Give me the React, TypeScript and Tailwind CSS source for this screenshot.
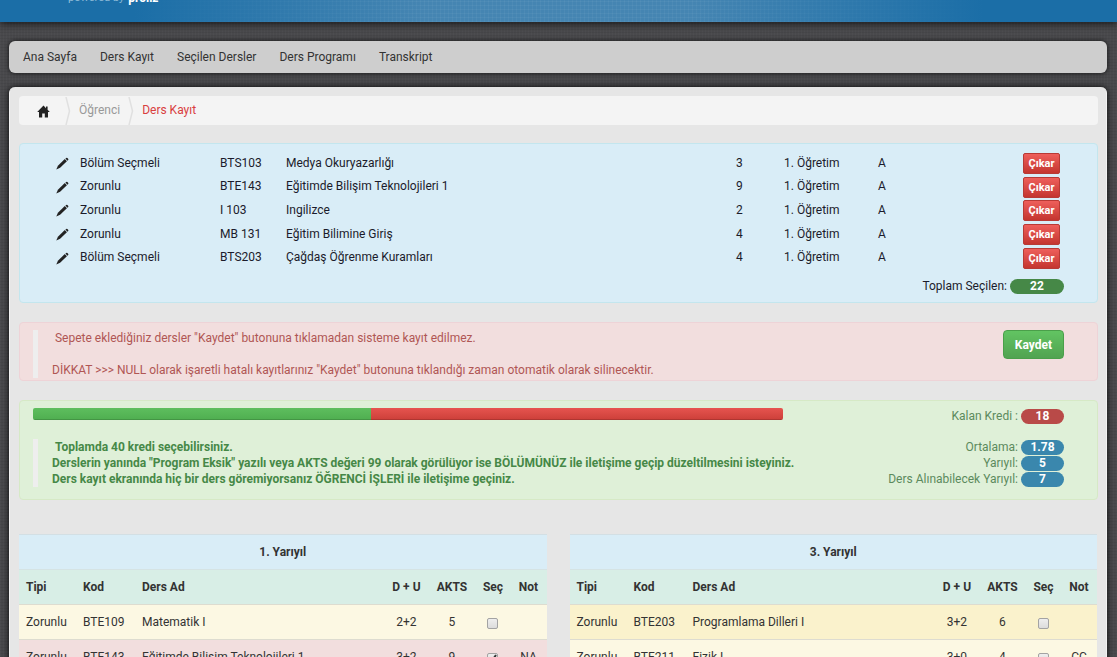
import React, { useState } from 'react';

const menu = ['Ana Sayfa', 'Ders Kayıt', 'Seçilen Dersler', 'Ders Programı', 'Transkript'];

const basket = [
    { type: 'Bölüm Seçmeli', code: 'BTS103', name: 'Medya Okuryazarlığı', akts: 3 },
    { type: 'Zorunlu', code: 'BTE143', name: 'Eğitimde Bilişim Teknolojileri 1', akts: 9 },
    { type: 'Zorunlu', code: 'I 103', name: 'Ingilizce', akts: 2 },
    { type: 'Zorunlu', code: 'MB 131', name: 'Eğitim Bilimine Giriş', akts: 4 },
    { type: 'Bölüm Seçmeli', code: 'BTS203', name: 'Çağdaş Öğrenme Kuramları', akts: 4 },
];

type Course = {
    type: string;
    code: string;
    name: string;
    hours: string;
    akts: number;
    selected?: boolean;
    grade?: string;
    color: string;
};

const semesters: { title: string; courses: Course[] }[] = [
    {
        title: '1. Yarıyıl',
        courses: [
            { type: 'Zorunlu', code: 'BTE109', name: 'Matematik I', hours: '2+2', akts: 5, color: 'bg-[#fcf8e3]' },
            { type: 'Zorunlu', code: 'BTE143', name: 'Eğitimde Bilişim Teknolojileri 1', hours: '3+2', akts: 9, selected: true, grade: 'NA', color: 'bg-[#f2dede]' },
        ],
    },
    {
        title: '3. Yarıyıl',
        courses: [
            { type: 'Zorunlu', code: 'BTE203', name: 'Programlama Dilleri I', hours: '3+2', akts: 6, color: 'bg-[#faf2cc]' },
            { type: 'Zorunlu', code: 'BTE211', name: 'Fizik I', hours: '3+0', akts: 4, grade: 'CC', color: 'bg-[#fcf8e3]' },
        ],
    },
];

const HomeIcon = () => (
    <svg width="13" height="13" viewBox="0 0 13 13" fill="#222" aria-hidden="true">
        <path d="M6.5 0.6 L0.2 7 H2 V12.4 H5.2 V8.4 H7.8 V12.4 H11 V7 H12.8 L10.6 4.8 V1.6 H9 V3.2 Z" />
    </svg>
);

const PencilIcon = () => (
    <svg width="13" height="13" viewBox="0 0 13 13" fill="#222" aria-hidden="true">
        <path d="M9.4 1.6 L10.2 0.9 Q10.8 0.5 11.4 1.1 L12.1 1.8 Q12.7 2.4 12.2 3 L11.4 3.8 Z" />
        <path d="M8.8 2.1 L10.9 4.3 L4.1 10.8 L0.3 12.6 L1.9 8.8 Z" />
    </svg>
);

const Separator = () => (
    <svg width="6" height="28" viewBox="0 0 6 28" fill="none" stroke="#e0e0e0" strokeWidth="1.5" aria-hidden="true">
        <path d="M1 0 L4.5 14 L1 28" />
    </svg>
);

const Stat = ({ label, value, color }: { label: string; value: string; color: string }) => (
    <div className="flex items-center justify-end gap-[3px]">
        <span>{label}</span>
        <span className={`w-[43px] rounded-full text-center leading-[15px] font-bold text-white ${color}`}>{value}</span>
    </div>
);

const SemesterTable = ({ title, courses }: { title: string; courses: Course[] }) => {
    const [selected, setSelected] = useState(courses.filter((c) => c.selected).map((c) => c.code));

    const toggle = (code: string) => {
        setSelected(selected.includes(code) ? selected.filter((c) => c !== code) : [...selected, code]);
    };

    return (
        <table className="w-full table-fixed border-collapse text-[#333]">
            <colgroup>
                <col className="w-[57px]" />
                <col className="w-[59px]" />
                <col />
                <col className="w-[44px]" />
                <col className="w-[47px]" />
                <col className="w-[35px]" />
                <col className="w-[36px]" />
            </colgroup>
            <thead>
                <tr className="h-[35px] border-t border-[#d3dfe4] bg-[#d9edf7]">
                    <th colSpan={7}>{title}</th>
                </tr>
                <tr className="h-[35px] border-t border-[#d5e3e4] bg-[#d8eee6] text-left">
                    <th className="pl-[7px]">Tipi</th>
                    <th className="pl-[7px]">Kod</th>
                    <th className="pl-[7px]">Ders Ad</th>
                    <th className="text-center">D + U</th>
                    <th className="text-center">AKTS</th>
                    <th className="text-center">Seç</th>
                    <th className="text-center">Not</th>
                </tr>
            </thead>
            <tbody>
                {courses.map((c) => (
                    <tr key={c.code} className={`h-[35px] border-t border-[#dddcd0] ${c.color}`}>
                        <td className="pl-[7px]">{c.type}</td>
                        <td className="pl-[7px]">{c.code}</td>
                        <td className="pl-[7px]">{c.name}</td>
                        <td className="text-center">{c.hours}</td>
                        <td className="text-center">{c.akts}</td>
                        <td>
                            <label className="relative mx-auto mt-[2px] block size-[11px]">
                                <input
                                    type="checkbox"
                                    aria-label={`${c.name} seç`}
                                    checked={selected.includes(c.code)}
                                    onChange={() => toggle(c.code)}
                                    className="peer block size-[11px] appearance-none rounded-xs border border-[#a3a3a3] bg-linear-to-b from-[#eeeeee] to-[#dcdcdc]"
                                />
                                <svg className="pointer-events-none absolute inset-0 hidden peer-checked:block" viewBox="0 0 11 11" fill="none" stroke="#333" strokeWidth="2">
                                    <path d="M2.5 5.5 L4.8 8 L9 2" />
                                </svg>
                            </label>
                        </td>
                        <td className="text-center">{c.grade}</td>
                    </tr>
                ))}
            </tbody>
        </table>
    );
};

const App = () => {
    return (
        <div className="h-screen overflow-hidden bg-[#49494c] bg-[repeating-linear-gradient(0deg,rgba(0,0,0,0.05)_0px,rgba(0,0,0,0.05)_1px,transparent_1px,transparent_3px),repeating-linear-gradient(90deg,rgba(255,255,255,0.02)_0px,rgba(255,255,255,0.02)_1px,transparent_1px,transparent_3px)] font-[Roboto,'Liberation_Sans',sans-serif] text-[12px] leading-4">
            {/* Üst başlık */}
            <header className="flex h-[22px] items-start overflow-hidden bg-[linear-gradient(90deg,#1b6ea7_0%,#1b6ea7_12%,transparent_38%,transparent_62%,#1b6ea7_88%,#1b6ea7_100%),repeating-linear-gradient(0deg,rgba(255,255,255,0.04)_0px,rgba(255,255,255,0.04)_1px,transparent_1px,transparent_4px),repeating-linear-gradient(90deg,rgba(255,255,255,0.04)_0px,rgba(255,255,255,0.04)_1px,transparent_1px,transparent_4px),linear-gradient(#4585b2,#4585b2)] pl-[68px] shadow-[0_1px_8px_rgba(0,0,0,0.8)]">
                <p className="-mt-[10px] flex gap-1 text-[11px] leading-4 text-[#8fbbd8]">
                    powered by <b className="text-[12px] text-white">proliz</b>
                </p>
            </header>

            <div className="pt-[19px] pr-[10px] pl-[9px]">
                {/* Menü */}
                <nav className="flex h-8 items-center gap-[23px] rounded-md bg-[#cecece] px-[14px] text-[#333] shadow-[0_0_5px_rgba(0,0,0,0.8)]">
                    {menu.map((item) => (
                        <a key={item} href="#">{item}</a>
                    ))}
                </nav>

                <main className="mt-[14px] rounded-t-md border-x border-[#f2f2f2] bg-[#e6e6e6] pt-[9px] pr-2 pb-10 pl-[9px] shadow-[0_0_6px_rgba(0,0,0,0.9)]">
                    <nav className="flex h-[29px] items-center rounded-sm bg-[#f4f4f4]">
                        <a href="#" aria-label="Ana Sayfa" className="flex w-[46px] justify-end pt-px pr-[15px]"><HomeIcon /></a>
                        <Separator />
                        <a href="#" className="px-2 pb-px text-[#999]">Öğrenci</a>
                        <Separator />
                        <span className="pb-px pl-2 text-[#d9403f]">Ders Kayıt</span>
                    </nav>

                    {/* Seçilen dersler */}
                    <section className="mt-[18px] rounded-sm border border-[#c3e6ee] bg-[#d9edf7] pt-[7px] pr-[33px] pb-2 pl-9 text-[#1b1b2b]">
                        <div className="pr-1">
                            <table className="h-[118px] w-full table-fixed">
                                <colgroup>
                                    <col className="w-6" />
                                    <col className="w-[140px]" />
                                    <col className="w-[66px]" />
                                    <col />
                                    <col className="w-12" />
                                    <col className="w-[94px]" />
                                    <col className="w-[145px]" />
                                    <col className="w-[37px]" />
                                </colgroup>
                                <tbody>
                                    {basket.map((c) => (
                                        <tr key={c.code}>
                                            <td className="pt-[2px]"><PencilIcon /></td>
                                            <td>{c.type}</td>
                                            <td>{c.code}</td>
                                            <td>{c.name}</td>
                                            <td>{c.akts}</td>
                                            <td>1. Öğretim</td>
                                            <td>A</td>
                                            <td className="pt-[2px]">
                                                <button type="button" className="block h-[21px] w-full rounded-xs border border-[#b83a35] bg-linear-to-b from-[#ee5f5b] to-[#c4352f] text-[11px] leading-[19px] font-bold text-white">
                                                    Çıkar
                                                </button>
                                            </td>
                                        </tr>
                                    ))}
                                </tbody>
                            </table>
                        </div>
                        <div className="mt-[9px] flex items-center justify-end gap-[3px]">
                            <span>Toplam Seçilen:</span>
                            <span className="w-[54px] rounded-full bg-[#468847] text-center leading-[15px] font-bold text-white">22</span>
                        </div>
                    </section>

                    {/* Uyarı */}
                    <section className="mt-[19px] flex items-start justify-between rounded-sm border border-[#eed3d7] bg-[#f2dede] pt-[7px] pr-[33px] pb-[2px] pl-[13px] text-[#b05654]">
                        <blockquote className="border-l-[5px] border-[#eee] pl-[14px]">
                            <p>&nbsp;Sepete eklediğiniz dersler "Kaydet" butonuna tıklamadan sisteme kayıt edilmez.</p>
                            <p className="mt-4">DİKKAT &gt;&gt;&gt; NULL olarak işaretli hatalı kayıtlarınız "Kaydet" butonuna tıklandığı zaman otomatik olarak silinecektir.</p>
                        </blockquote>
                        <button type="button" className="h-[29px] rounded-sm border border-[#4a9f4a] bg-linear-to-b from-[#62c462] to-[#51a351] px-[11px] font-bold text-white">
                            Kaydet
                        </button>
                    </section>

                    {/* Kredi durumu */}
                    <section className="mt-[19px] rounded-sm border border-[#d6e9c6] bg-[#dff0d8] pt-[7px] pr-[33px] pb-3 pl-[13px] text-[#5c8a5d]">
                        <div className="flex items-start">
                            <div className="flex h-3 flex-1 overflow-hidden rounded-xs">
                                <div className="w-[45%] bg-linear-to-b from-[#5ebe5e] to-[#4fae50] shadow-[inset_0_-1px_0_rgba(0,0,0,0.15)]" />
                                <div className="flex-1 bg-linear-to-b from-[#e6544f] to-[#cc3f39] shadow-[inset_0_-1px_0_rgba(0,0,0,0.15)]" />
                            </div>
                            <div className="w-[281px]">
                                <Stat label="Kalan Kredi :" value="18" color="bg-[#b94a48]" />
                            </div>
                        </div>
                        <div className="mt-[15px] flex items-start justify-between">
                            <blockquote className="border-l-[5px] border-[#eee] pl-[14px] font-bold text-[#468847]">
                                <p>&nbsp;Toplamda 40 kredi seçebilirsiniz.</p>
                                <p>Derslerin yanında "Program Eksik" yazılı veya AKTS değeri 99 olarak görülüyor ise BÖLÜMÜNÜZ ile iletişime geçip düzeltilmesini isteyiniz.</p>
                                <p>Ders kayıt ekranında hiç bir ders göremiyorsanız ÖĞRENCİ İŞLERİ ile iletişime geçiniz.</p>
                            </blockquote>
                            <div className="shrink-0">
                                <Stat label="Ortalama:" value="1.78" color="bg-[#3a87ad]" />
                                <Stat label="Yarıyıl:" value="5" color="bg-[#3a87ad]" />
                                <Stat label="Ders Alınabilecek Yarıyıl:" value="7" color="bg-[#3a87ad]" />
                            </div>
                        </div>
                    </section>

                    {/* Yarıyıl dersleri */}
                    <div className="mt-[34px] grid grid-cols-2 items-start gap-[23px] pr-px">
                        {semesters.map((s) => (
                            <SemesterTable key={s.title} title={s.title} courses={s.courses} />
                        ))}
                    </div>
                </main>
            </div>
        </div>
    );
};

export default App;
